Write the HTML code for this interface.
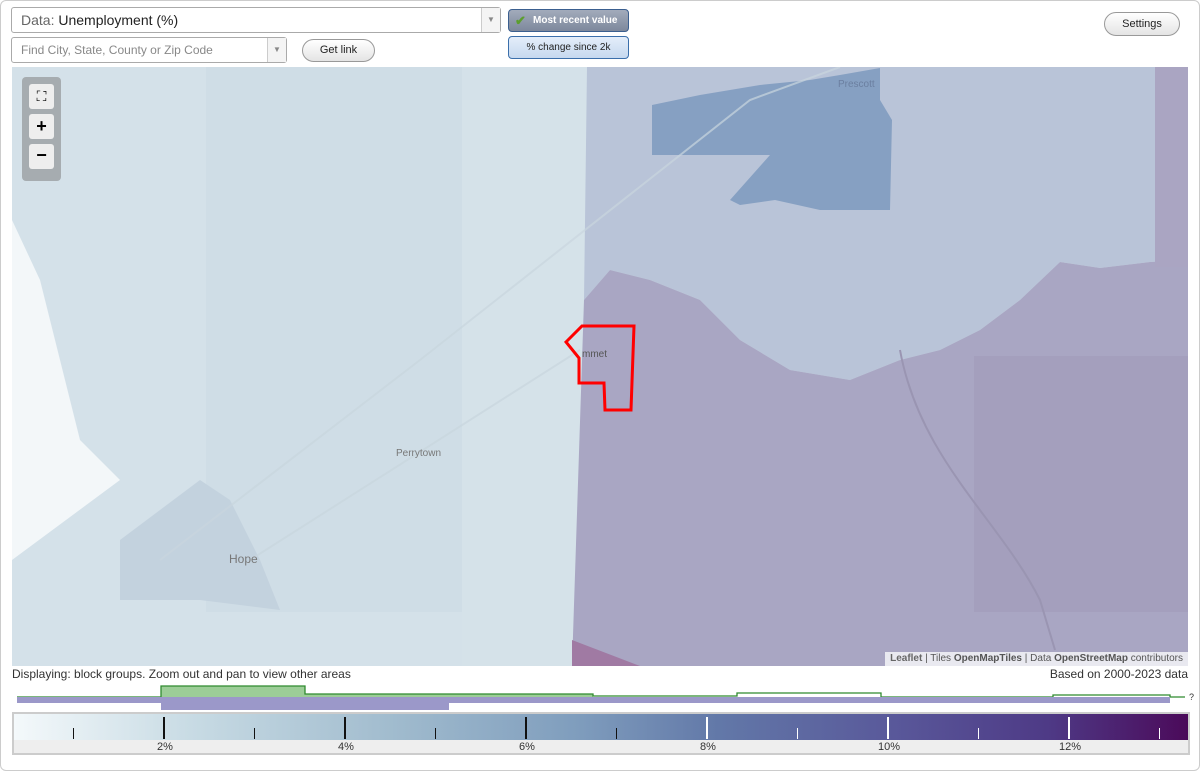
<!DOCTYPE html>
<html><head><style>
body{margin:0;width:1200px;height:771px;background:#fff;font-family:"Liberation Sans",sans-serif;overflow:hidden;position:relative}
.frame{position:absolute;left:0;top:0;width:1198px;height:769px;border:1px solid #ccc;border-radius:6px}
.sel{position:absolute;background:#fff;border:1px solid #aaa;border-radius:3px;box-sizing:border-box}
.arr{position:absolute;right:0;top:0;bottom:0;width:18px;border-left:1px solid #ccc;background:#f4f4f4;color:#888;font-size:8px;text-align:center}
.btn{position:absolute;border:1px solid #999;border-radius:12px;background:linear-gradient(#fff,#e4e4e4);font-size:11px;text-align:center;box-sizing:border-box}
.tick{position:absolute;top:717px;width:2px;height:22px;background:#111}
.mt{position:absolute;top:728px;width:1px;height:11px;background:#111}
.lab{position:absolute;top:741px;font-size:11px;color:#333;width:40px;margin-left:-19px;text-align:center}
</style></head><body>
<div class="frame"></div>
<div class="sel" style="left:11px;top:7px;width:490px;height:26px;font-size:14px;line-height:24px;padding-left:9px;color:#222"><span style="color:#666">Data:</span> Unemployment (%)<div class="arr" style="line-height:24px">▼</div></div>
<div class="sel" style="left:11px;top:37px;width:276px;height:26px;font-size:12px;line-height:24px;padding-left:9px;color:#888">Find City, State, County or Zip Code<div class="arr" style="line-height:24px">▼</div></div>
<div class="btn" style="left:302px;top:39px;width:73px;height:23px;line-height:21px;color:#222">Get link</div>
<div style="position:absolute;left:508px;top:9px;width:121px;height:23px;border:1px solid #3b5f8f;border-radius:4px;box-sizing:border-box;background:linear-gradient(#a2abbb,#7d889c);color:#fff;font-size:10px;font-weight:bold;line-height:21px;padding-left:24px">Most recent value<span style="position:absolute;left:6px;top:0;color:#5c9e2e;font-size:13px">✔</span></div>
<div style="position:absolute;left:508px;top:36px;width:121px;height:23px;border:1px solid #3b6fab;border-radius:4px;box-sizing:border-box;background:linear-gradient(#e4eefa,#c6d9ef);color:#222;font-size:10px;line-height:21px;text-align:center">% change since 2k</div>
<div class="btn" style="left:1104px;top:12px;width:76px;height:24px;line-height:22px;color:#222">Settings</div>
<svg style="position:absolute;left:12px;top:67px" width="1176" height="599" viewBox="12 67 1176 599">
<rect x="12" y="67" width="1176" height="599" fill="#d4e1e9"/>
<polygon points="12,220 40,280 60,360 80,440 120,480 12,560" fill="#f3f7f9"/>
<rect x="206" y="67" width="256" height="545" fill="#cfdde6"/>
<rect x="462" y="100" width="125" height="566" fill="#d5e2e9"/>
<polygon points="587,67 1188,67 1188,260 1150,262 1100,268 1060,262 1020,300 980,330 940,350 900,360 850,380 790,370 740,340 700,300 650,280 610,270 584,300" fill="#b9c4d8"/>
<polygon points="584,300 610,270 650,280 700,300 740,340 790,370 850,380 900,360 940,350 980,330 1020,300 1060,262 1100,268 1150,262 1188,260 1188,666 572,666" fill="#a9a6c3"/>
<rect x="974" y="356" width="214" height="256" fill="#a49fbd"/>
<rect x="1155" y="67" width="33" height="200" fill="#aaa5c2"/>
<polygon points="652,105 700,95 760,85 810,80 840,75 880,68 880,100 892,120 890,210 820,210 775,200 740,205 730,200 770,155 652,155" fill="#86a0c2"/>
<polygon points="572,640 640,666 572,666" fill="#a07aa3"/>
<polygon points="120,540 200,480 230,500 260,560 280,610 200,600 120,600" fill="#c3d2de"/>
<g stroke="#c9d6de" fill="none" stroke-width="2" opacity="0.7"><path d="M160,560 L420,360 L750,100 L840,67"/><path d="M250,560 L580,350"/></g>
<path d="M900,350 C920,460 1000,520 1040,600 L1055,650" stroke="#9a95b2" fill="none" stroke-width="2"/>
<polygon points="566,342 582,326 634,326 631,410 605,410 604,383 579,383 579,358" fill="none" stroke="#f00" stroke-width="3"/>
<text x="582" y="357" font-size="10" fill="#555" font-family="Liberation Sans">mmet</text>
<text x="396" y="456" font-size="10" fill="#777" font-family="Liberation Sans">Perrytown</text>
<text x="229" y="563" font-size="12" fill="#777" font-family="Liberation Sans">Hope</text>
<text x="838" y="87" font-size="10" fill="#6b7fa0" font-family="Liberation Sans">Prescott</text>
</svg>
<div style="position:absolute;left:22px;top:77px;width:39px;height:104px;background:rgba(120,120,120,.5);border-radius:4px"></div>
<div style="position:absolute;left:29px;top:84px;width:25px;height:25px;background:#eee;border-radius:3px;font-size:14px;text-align:center;line-height:25px">⛶</div>
<div style="position:absolute;left:29px;top:114px;width:25px;height:25px;background:#eee;border-radius:3px;font-size:18px;font-weight:bold;text-align:center;line-height:25px">+</div>
<div style="position:absolute;left:29px;top:144px;width:25px;height:25px;background:#eee;border-radius:3px;font-size:18px;font-weight:bold;text-align:center;line-height:23px">−</div>
<div style="position:absolute;right:12px;top:652px;background:rgba(255,255,255,.75);font-size:10px;color:#555;padding:1px 5px;height:13px"><b style="color:#666">Leaflet</b> | Tiles <b>OpenMapTiles</b> | Data <b>OpenStreetMap</b> contributors</div>
<div style="position:absolute;left:12px;top:667px;font-size:12px;color:#333">Displaying: block groups. Zoom out and pan to view other areas</div>
<div style="position:absolute;right:12px;top:667px;font-size:12px;color:#333">Based on 2000-2023 data</div>
<svg style="position:absolute;left:0;top:680px" width="1200" height="35">
<rect x="161" y="6" width="144" height="12" fill="#9ccd97"/>
<rect x="305" y="14" width="288" height="4" fill="#9ccd97"/>
<path d="M17,17 H161 V6 H305 V14 H593 V16 H737 V13 H881 V17 H1053 V15 H1170 V17 H1185" stroke="#2f8a2f" fill="none" stroke-width="1.3"/>
<rect x="17" y="17" width="1153" height="6" fill="#9b98c9"/>
<rect x="161" y="17" width="288" height="13" fill="#9b98c9"/>
<text x="1189" y="20" font-size="9" fill="#333" font-family="Liberation Sans">?</text>
</svg>
<div style="position:absolute;left:12px;top:712px;width:1178px;height:43px;border:2px solid #ccc;box-sizing:border-box;background:#eee"></div>
<div style="position:absolute;left:14px;top:714px;width:1174px;height:26px;background:linear-gradient(90deg,#f4f9fb,#c8dbe4 15%,#9fbacd 33%,#7f9dbd 48%,#6278a8 60%,#59589a 75%,#4e3a86 88%,#4b0a5a)"></div>
<div class="tick" style="left:163px"></div><div class="tick" style="left:344px"></div><div class="tick" style="left:525px"></div>
<div class="tick" style="left:706px;background:#fff"></div><div class="tick" style="left:887px;background:#fff"></div><div class="tick" style="left:1068px;background:#fff"></div>
<div class="mt" style="left:73px"></div><div class="mt" style="left:254px"></div><div class="mt" style="left:435px"></div><div class="mt" style="left:616px"></div>
<div class="mt" style="left:797px;background:#fff"></div><div class="mt" style="left:978px;background:#fff"></div><div class="mt" style="left:1159px;background:#fff"></div>
<div class="lab" style="left:164px">2%</div><div class="lab" style="left:345px">4%</div><div class="lab" style="left:526px">6%</div><div class="lab" style="left:707px">8%</div><div class="lab" style="left:888px">10%</div><div class="lab" style="left:1069px">12%</div>
</body></html>
